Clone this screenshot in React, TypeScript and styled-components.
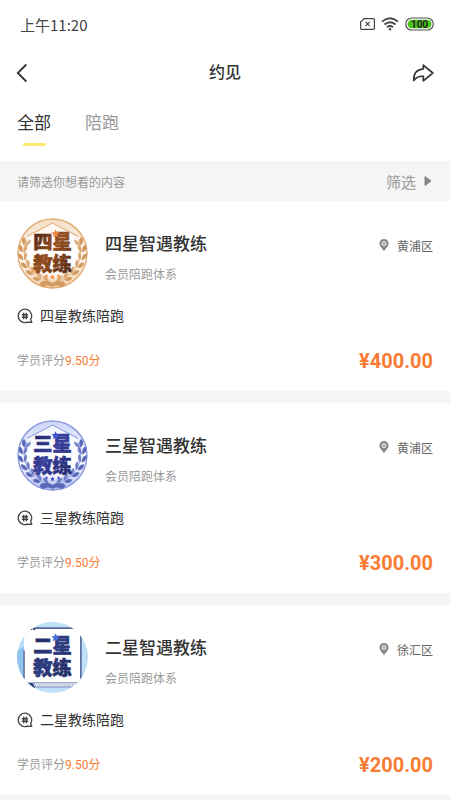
import React from 'react';
import styled, { createGlobalStyle } from 'styled-components';

const GlobalStyle = createGlobalStyle`
  *, *::before, *::after { box-sizing: border-box; }
  body {
    margin: 0;
    background: #f5f5f5;
    color: #333;
    font-family: Roboto, "Noto Sans CJK SC", sans-serif;
  }
  h1, h2, p { margin: 0; }
  button {
    border: 0;
    padding: 0;
    background: none;
    color: inherit;
    font: inherit;
    cursor: pointer;
  }
  svg { display: block; flex: none; }
`;

const Page = styled.div`
  min-height: 100vh;
`;

const StatusBar = styled.div`
  display: flex;
  align-items: center;
  justify-content: space-between;
  height: 48px;
  padding: 0 16px 0 20px;
  background: #fff;
  color: #444;
  font-family: "Noto Sans CJK SC", sans-serif;
  font-size: 15px;
`;

const StatusIcons = styled.div`
  display: flex;
  align-items: center;
  gap: 6px;
`;

const NavBar = styled.header`
  display: grid;
  grid-template-columns: 1fr auto 1fr;
  align-items: center;
  height: 50px;
  padding: 0 16px;
  background: #fff;
`;

const NavTitle = styled.h1`
  font-size: 16px;
  font-weight: 500;
  line-height: 24px;
`;

const NavButton = styled.button<{ $end?: boolean }>`
  justify-self: ${(p) => (p.$end ? 'end' : 'start')};
`;

const Tabs = styled.nav`
  display: flex;
  gap: 34px;
  height: 63px;
  padding: 12px 17px 0;
  background: #fff;
`;

const Tab = styled.button<{ $active?: boolean }>`
  display: flex;
  flex-direction: column;
  align-items: center;
  gap: 7px;
  height: 36px;
  color: ${(p) => (p.$active ? '#333' : '#999')};
  font-size: 17px;
  line-height: 26px;

  &::after {
    content: '';
    width: 23px;
    height: 3px;
    flex: none;
    border-radius: 2px;
    background: ${(p) => (p.$active ? '#fbe76a' : 'transparent')};
  }
`;

const FilterBar = styled.div`
  display: flex;
  align-items: center;
  justify-content: space-between;
  height: 40px;
  padding: 0 18px 0 17px;
  color: #999;
  font-size: 12px;
`;

const FilterButton = styled.button`
  display: flex;
  align-items: center;
  gap: 8px;
  font-size: 15px;
`;

const List = styled.main`
  display: flex;
  flex-direction: column;
  gap: 12px;
`;

const Card = styled.article`
  padding: 17px 17px 16px;
  background: #fff;
`;

const CardHead = styled.div`
  display: flex;
  gap: 17px;
`;

const Intro = styled.div`
  flex: 1;
  padding-top: 12px;
`;

const CoachName = styled.h2`
  font-size: 17px;
  font-weight: 500;
  line-height: 28px;
`;

const Subtitle = styled.p`
  margin-top: 8px;
  color: #999;
  font-size: 12px;
  line-height: 18px;
`;

const District = styled.div`
  display: flex;
  align-items: center;
  gap: 8px;
  height: 20px;
  margin-top: 17px;
  color: #666;
  font-size: 12px;
`;

const Service = styled.div`
  display: flex;
  align-items: center;
  gap: 7px;
  margin-top: 16px;
  font-size: 14px;
  line-height: 22px;
`;

const CardFoot = styled.div`
  display: flex;
  align-items: center;
  justify-content: space-between;
  height: 28px;
  margin-top: 20px;
`;

const Rating = styled.p`
  color: #999;
  font-size: 12px;
  line-height: 20px;
`;

const Score = styled.span`
  color: #f87c34;
`;

const Price = styled.span`
  color: #f87c34;
  font-size: 20px;
  font-weight: 700;
`;

const BadgeText = styled.text`
  font-family: "Noto Sans CJK SC", sans-serif;
  font-size: 19px;
  font-weight: 900;
`;

const BatteryText = styled.text`
  font-family: Roboto, sans-serif;
  font-size: 10px;
  font-weight: 700;
`;

type Level = 'four' | 'three' | 'two';

const palettes = {
  four: { edge: '#e3ae78', wash: '#f5dcc0', leaf: '#d39a60', light: '#f0cda6', top: '#97501f', bottom: '#542a15', star: '#f08a3c' },
  three: { edge: '#8f9ddf', wash: '#cbd4f8', leaf: '#5968b8', light: '#b3bff0', top: '#39409c', bottom: '#25286f', star: '#4052d3' },
  two: { edge: '#abd5f3', wash: '#bfe0f7', leaf: '#263878', light: '#d6edfb', top: '#303d83', bottom: '#20295f', star: '#456fda' },
};

const STAR = 'M0-4 1.2-1.3 4-1 2 1 2.5 4 0 2.5-2.5 4-2 1-4-1-1.2-1.3z';

const leaves = [
  [8, 23, 12], [5, 30, -6], [5, 38, -18], [8, 46, -32], [13, 53, -48], [20, 59, -62], [27, 63, -76],
];

function Laurel({ color, light }: { color: string; light: string }) {
  return (
    <g>
      <path d="M9 22C4 38 10 55 31 64" fill="none" stroke={light} strokeWidth="2" />
      {leaves.map(([x, y, r]) => (
        <g key={y} transform={`translate(${x} ${y}) rotate(${r})`}>
          <path d="M0 4C-4 2-4-2-2-4 1-2 1 1 0 4z" fill={color} />
          <path d="M1 4C1 0 3-2 5-3 6 1 4 3 1 4z" fill={color} opacity=".8" />
        </g>
      ))}
    </g>
  );
}

function Badge({ level, mark }: { level: Level; mark: string }) {
  const c = palettes[level];
  const id = `badge-${level}`;
  return (
    <svg width="71" height="71" viewBox="0 0 70 70" role="img" aria-label={`${mark}教练`}>
      <defs>
        <clipPath id={`${id}-clip`}><circle cx="35" cy="35" r="35" /></clipPath>
        <linearGradient id={`${id}-ink`} gradientUnits="userSpaceOnUse" x1="16" y1="20" x2="54" y2="50">
          <stop offset="0" stopColor={c.bottom} />
          <stop offset=".45" stopColor={c.top} />
          <stop offset="1" stopColor={c.bottom} />
        </linearGradient>
        <linearGradient id={`${id}-bg`} x1="0" y1="0" x2="0" y2="1">
          <stop offset="0" stopColor={c.wash} />
          <stop offset=".55" stopColor="#fff" />
          <stop offset="1" stopColor={c.light} />
        </linearGradient>
      </defs>
      <g clipPath={`url(#${id}-clip)`}>
        <circle cx="35" cy="35" r="35" fill={`url(#${id}-bg)`} />
        {level === 'two' ? (
          <g>
            <path d="M0 0h70v70H0z" fill={c.wash} />
            <path d="M0 28l7-4v36H0z" fill="#8fc3ec" />
            <path d="M7 6h56v54H7z" fill="#fff" />
            <path d="M18 6h45v54" fill="none" stroke={c.leaf} strokeWidth="1.2" />
            <path d="M7 28v28" stroke={c.leaf} strokeWidth="1" />
            <path d="M13 7h2m1 0h2" stroke={c.leaf} strokeWidth="2" />
            <path d="M8 60h7l3 5h-8z" fill={c.leaf} />
            <path d="M16 60h47v4H19z" fill="#fff" stroke={c.leaf} strokeWidth=".6" />
            <path d="M20 62h41" stroke="#9fb2cf" strokeWidth="2" strokeDasharray="1 1" />
          </g>
        ) : (
          <g>
            <circle cx="35" cy="35" r="34" fill="none" stroke={c.edge} strokeWidth="1.6" />
            <path d="M11 18 35 5l24 13v32L35 60 11 50z" fill="#fff" opacity=".7" />
            <path d="M10 18 35 5l25 13" fill="none" stroke={c.edge} strokeWidth="1" />
            <Laurel color={c.leaf} light={c.light} />
            <g transform="translate(70 0) scale(-1 1)"><Laurel color={c.leaf} light={c.light} /></g>
            <path d="M22 65q8-5 13-1 5-4 13 1l-3 3q-6-3-10 0-4-3-10 0z" fill={c.leaf} />
            <g fill={c.star}>
              <path d={STAR} transform="translate(35 58) scale(.6)" />
              <path d={STAR} transform="translate(29 57) scale(.45)" />
              <path d={STAR} transform="translate(41 57) scale(.45)" />
            </g>
          </g>
        )}
        <BadgeText textAnchor="middle" fill={`url(#${id}-ink)`} stroke={`url(#${id}-ink)`} strokeWidth=".6">
          <tspan x="35" y="31">{mark}</tspan>
          <tspan x="35" y="52">教练</tspan>
        </BadgeText>
        <path d={STAR} transform="translate(38 15)" fill={c.star} />
      </g>
    </svg>
  );
}

function SimIcon() {
  return (
    <svg width="15" height="12" viewBox="0 0 15 12" fill="none" stroke="#444" strokeWidth="1.2" aria-hidden="true">
      <path d="M4.200.6h9c.7 0 1.200.5 1.200 1.200v8.400c0 .7-.5 1.200-1.200 1.200H1.800c-.7 0-1.200-.5-1.200-1.200V4z" />
      <path d="m5.500 3.900 4.200 4.200m0-4.200L5.500 8.100" />
    </svg>
  );
}

function WifiIcon() {
  return (
    <svg width="18" height="14" viewBox="0 0 18 14" fill="none" stroke="#444" strokeWidth="1.800" aria-hidden="true">
      <path d="M1 4.600q8-6.600 16 0M3.500 7.500q5.500-4.600 11 0M6 10.200q3-2.500 6 0" />
      <circle cx="9" cy="12.300" r="1.200" fill="#444" stroke="none" />
    </svg>
  );
}

function BatteryIcon() {
  return (
    <svg width="29" height="14" viewBox="0 0 29 14" role="img" aria-label="100%">
      <rect x=".7" y="1" width="27.600" height="12" rx="6" fill="#fff" stroke="#555" strokeWidth="1.200" />
      <rect x="2.500" y="2.700" width="24" height="8.600" rx="4.300" fill="#4bc318" />
      <BatteryText x="14.500" y="10.600" textAnchor="middle" fill="#222">100</BatteryText>
    </svg>
  );
}

function BackIcon() {
  return (
    <svg width="12" height="20" viewBox="0 0 12 20" fill="none" stroke="#333" strokeWidth="1.800" aria-hidden="true">
      <path d="M10.300 1.500 1.800 10l8.500 8.500" />
    </svg>
  );
}

function ShareIcon() {
  return (
    <svg width="22" height="18" viewBox="0 0 22 18" fill="none" stroke="#333" strokeWidth="1.700" strokeLinejoin="round" aria-hidden="true">
      <path d="M11.300 5V1.200L20.800 9l-9.500 7.800V12.300C7.500 12 4.500 12.800 1.800 16.500 1.500 10 4.500 5.500 11.300 5z" />
    </svg>
  );
}

function PinIcon() {
  return (
    <svg width="10" height="12" viewBox="0 0 10 12" aria-hidden="true">
      <path d="M5 0a4.600 4.600 0 0 0-4.600 4.600C.4 7.500 3.500 10 5 12c1.500-2 4.600-4.500 4.600-7.400A4.600 4.600 0 0 0 5 0z" fill="#888" />
      <circle cx="5" cy="4.600" r="2" fill="#aaa" stroke="#fff" strokeWidth=".8" />
    </svg>
  );
}

function TopicIcon() {
  return (
    <svg width="16" height="16" viewBox="0 0 16 16" fill="none" stroke="#444" aria-hidden="true">
      <path d="M10.500 14.100A6.700 6.700 0 1 1 13.600 11.500l1.200 2.800-4.300-.2z" strokeWidth="1.300" strokeLinejoin="round" />
      <path d="M6.700 4.800v6.400m2.600-6.400v6.400M4.800 6.700h6.400M4.800 9.300h6.400" strokeWidth="1.400" />
    </svg>
  );
}

function ArrowIcon() {
  return (
    <svg width="8" height="10" viewBox="0 0 8 10" aria-hidden="true">
      <path d="M1 .5 7 5 1 9.500z" fill="#888" stroke="#888" strokeLinejoin="round" />
    </svg>
  );
}

const coaches: { level: Level; mark: string; district: string; price: string }[] = [
  { level: 'four', mark: '四星', district: '黄浦区', price: '400.00' },
  { level: 'three', mark: '三星', district: '黄浦区', price: '300.00' },
  { level: 'two', mark: '二星', district: '徐汇区', price: '200.00' },
];

export default function App() {
  return (
    <Page>
      <GlobalStyle />
      <StatusBar>
        <span>上午11:20</span>
        <StatusIcons>
          <SimIcon />
          <WifiIcon />
          <BatteryIcon />
        </StatusIcons>
      </StatusBar>
      <NavBar>
        <NavButton aria-label="返回"><BackIcon /></NavButton>
        <NavTitle>约见</NavTitle>
        <NavButton $end aria-label="分享"><ShareIcon /></NavButton>
      </NavBar>
      <Tabs>
        <Tab $active>全部</Tab>
        <Tab>陪跑</Tab>
      </Tabs>
      <FilterBar>
        <span>请筛选你想看的内容</span>
        <FilterButton>筛选<ArrowIcon /></FilterButton>
      </FilterBar>
      <List>
        {coaches.map((coach) => (
          <Card key={coach.level}>
            <CardHead>
              <Badge level={coach.level} mark={coach.mark} />
              <Intro>
                <CoachName>{coach.mark}智遇教练</CoachName>
                <Subtitle>会员陪跑体系</Subtitle>
              </Intro>
              <District><PinIcon />{coach.district}</District>
            </CardHead>
            <Service><TopicIcon />{coach.mark}教练陪跑</Service>
            <CardFoot>
              <Rating>学员评分<Score>9.50分</Score></Rating>
              <Price>¥{coach.price}</Price>
            </CardFoot>
          </Card>
        ))}
      </List>
    </Page>
  );
}
